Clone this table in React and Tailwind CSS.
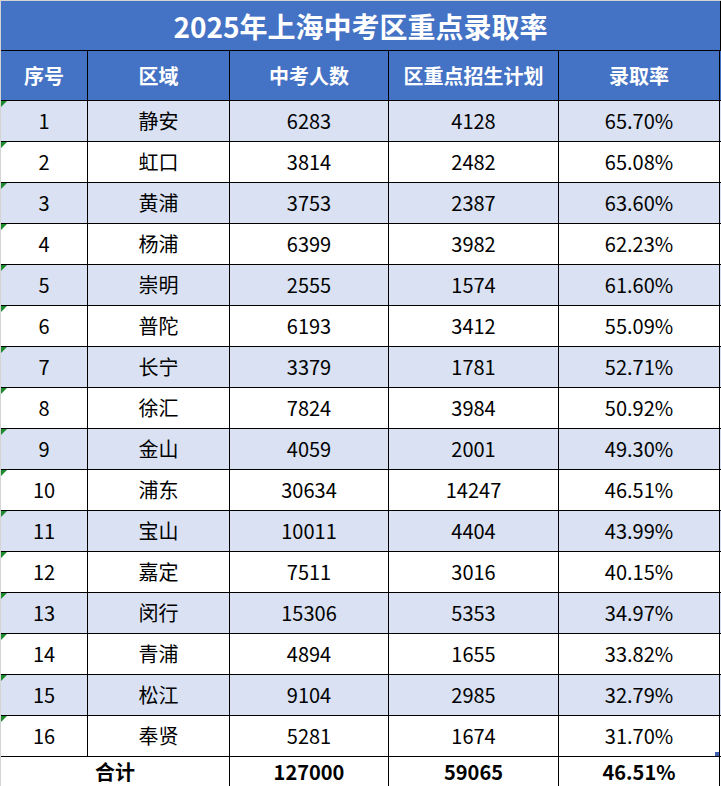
import React from "react";

const rows = [
  ["1", "静安", "6283", "4128", "65.70%"],
  ["2", "虹口", "3814", "2482", "65.08%"],
  ["3", "黄浦", "3753", "2387", "63.60%"],
  ["4", "杨浦", "6399", "3982", "62.23%"],
  ["5", "崇明", "2555", "1574", "61.60%"],
  ["6", "普陀", "6193", "3412", "55.09%"],
  ["7", "长宁", "3379", "1781", "52.71%"],
  ["8", "徐汇", "7824", "3984", "50.92%"],
  ["9", "金山", "4059", "2001", "49.30%"],
  ["10", "浦东", "30634", "14247", "46.51%"],
  ["11", "宝山", "10011", "4404", "43.99%"],
  ["12", "嘉定", "7511", "3016", "40.15%"],
  ["13", "闵行", "15306", "5353", "34.97%"],
  ["14", "青浦", "4894", "1655", "33.82%"],
  ["15", "松江", "9104", "2985", "32.79%"],
  ["16", "奉贤", "5281", "1674", "31.70%"],
];

const font = { fontFamily: '"Noto Sans CJK SC", "Noto Sans", sans-serif' };
const grid = "grid grid-cols-[87px_142px_159px_170px_161px]";

export default function App() {
  return (
    <div
      className="w-[721px] h-[786px] bg-white border-t border-l border-[#d4d4d4] overflow-hidden"
      style={font}
    >
      <div className="h-[50px] bg-[#4472c4] border-b border-r border-black flex items-center justify-center text-white font-bold text-[28px] leading-none">
        2025年上海中考区重点录取率
      </div>
      <div className={`${grid} h-[50px] bg-[#4472c4] text-white font-bold text-[20px] border-b border-black`}>
        {["序号", "区域", "中考人数", "区重点招生计划", "录取率"].map((h) => (
          <div key={h} className="border-r border-black flex items-center justify-center">
            {h}
          </div>
        ))}
      </div>
      {rows.map((r, i) => (
        <div
          key={r[0]}
          className={`${grid} h-[41px] border-b border-black text-[20px] text-black ${
            i % 2 === 0 ? "bg-[#d9e1f2]" : "bg-white"
          }`}
        >
          {r.map((c, j) => (
            <div key={j} className="relative border-r border-black flex items-center justify-center">
              {j === 0 && (
                <span className="absolute left-0 top-0 w-0 h-0 border-t-[6px] border-r-[6px] border-t-[#1e8a2e] border-r-transparent" />
              )}
              {j === 4 && i === 15 && (
                <span className="absolute right-[0px] bottom-[0px] w-[4px] h-[4px] bg-[#3f5fb0]" />
              )}
              {c}
            </div>
          ))}
        </div>
      ))}
      <div className={`${grid} h-[30px] border-b border-black text-[20px] font-bold text-black bg-white`}>
        <div className="col-span-2 border-r border-black flex items-center justify-center">合计</div>
        <div className="border-r border-black flex items-center justify-center">127000</div>
        <div className="border-r border-black flex items-center justify-center">59065</div>
        <div className="border-r border-black flex items-center justify-center">46.51%</div>
      </div>
    </div>
  );
}
